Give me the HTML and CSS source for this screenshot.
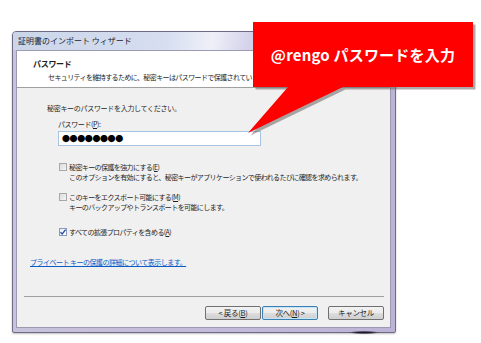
FILE: index.html
```html
<!DOCTYPE html>
<html lang="ja">
  <head>
    <meta charset="UTF-8" />
    <title>証明書のインポート ウィザード</title>
    <link rel="stylesheet" href="styles.css">
  </head>
  <body>
    <div class="window">
      <div class="titlebar">証明書のインポート ウィザード</div>
      <div class="client">
        <div class="header">
          <div class="h-title">パスワード</div>
          <div class="h-sub">セキュリティを維持するために、秘密キーはパスワードで保護されています。</div>
        </div>
        <div class="body">
          <p class="intro">秘密キーのパスワードを入力してください。</p>
          <div class="field">
            <div class="field-label">パスワード(<u>P</u>):</div>
            <div class="input">●●●●●●●●</div>
          </div>
          <div class="opt opt-1">
            <span class="cb"></span>
            <div class="opt-text">
              <div>秘密キーの保護を強力にする(<u>E</u>)</div>
              <div>このオプションを有効にすると、秘密キーがアプリケーションで使われるたびに確認を求められます。</div>
            </div>
          </div>
          <div class="opt opt-2">
            <span class="cb"></span>
            <div class="opt-text">
              <div>このキーをエクスポート可能にする(<u>M</u>)</div>
              <div>キーのバックアップやトランスポートを可能にします。</div>
            </div>
          </div>
          <div class="opt opt-3">
            <span class="cb checked">
              <svg viewBox="0 0 8 8" width="8" height="8"><path d="M1.5 4.2 L3.2 6 L6.6 1.6" fill="none" stroke="#2a4a9a" stroke-width="1.3"/></svg>
            </span>
            <div class="opt-text">
              <div>すべての拡張プロパティを含める(<u>A</u>)</div>
            </div>
          </div>
          <a class="link" href="#">プライベート キーの保護の詳細について表示します。</a>
        </div>
        <div class="footer">
          <div class="buttons">
            <span class="btn">&lt; 戻る(<u>B</u>)</span>
            <span class="btn btn-default">次へ(<u>N</u>) &gt;</span>
            <span class="btn btn-cancel">キャンセル</span>
          </div>
        </div>
      </div>
    </div>

    <!-- red callout over the dialog -->
    <svg class="callout-shape" width="481" height="343" viewBox="0 0 481 343">
      <path class="callout-shadow" d="M253 22 H473 V87 H343 L248 133 L288 87 H253 Z" transform="translate(2.5 2.5)"/>
      <path class="callout-fill" d="M253 22 H473 V87 H343 L248 133 L288 87 H253 Z"/>
    </svg>
    <div class="callout-text">@rengo パスワードを入力</div>
  </body>
</html>
```

FILE: styles.css
```css
html,
body {
  margin: 0;
  height: 100%;
  background: #fff;
}
body {
  position: relative;
  font-family: "Noto Sans CJK JP", "Noto Sans", sans-serif;
  color: #1e1e1e;
  overflow: hidden;
}

.window {
  position: relative;
  margin: 31px 0 0 12px;
  width: 384px;
  height: 302px;
  box-sizing: border-box;
  border: 1px solid #6f6a86;
  border-radius: 4px 4px 2px 2px;
  background: linear-gradient(to right, #c8c3dc, #bdb3d6);
  display: flex;
  flex-direction: column;
  padding: 0 4px 4px 3px;
  box-shadow: 0 1px 2px rgba(0, 0, 0, 0.25);
}
/* dark reflection under the frame */
.window:after {
  content: "";
  position: absolute;
  left: 336px;
  bottom: -2px;
  width: 30px;
  height: 3px;
  border-radius: 2px;
  background: radial-gradient(ellipse at center, #1a1a2a 30%, rgba(30, 30, 50, 0) 75%);
}
.titlebar {
  height: 18px;
  line-height: 18px;
  font-size: 8px;
  color: #1b1b2b;
  background: linear-gradient(100deg, #cad6e8 0%, #d6def0 40%, #eef0f8 52%, #d3d2ea 62%, #d9cde6 100%);
  margin: 0 -4px 0 -3px;
  padding-left: 5px;
  border-radius: 3px 3px 0 0;
}
.client {
  flex: 1;
  background: #f0f0f0;
  border: 1px solid #9d99b0;
  display: flex;
  flex-direction: column;
  font-size: 7px;
  letter-spacing: -0.6px;
}

.header {
  background: #fff;
  height: 37px;
  border-bottom: 1px solid #a0a0a0;
  padding: 8px 0 0 16px;
  box-sizing: border-box;
}
.h-title {
  font-size: 8px;
  font-weight: bold;
  line-height: 10px;
  letter-spacing: -0.3px;
}
.h-sub {
  margin: 3px 0 0 15px;
  line-height: 10px;
  white-space: nowrap;
}

.body {
  flex: 1;
  padding: 15px 0 0 0;
}
.intro {
  margin: 0 0 0 30px;
  line-height: 10px;
  letter-spacing: -0.3px;
}
.field {
  margin: 6px 0 0 41px;
}
.field-label {
  line-height: 10px;
  letter-spacing: -0.4px;
}
.input {
  margin-top: 2px;
  width: 203px;
  height: 15px;
  box-sizing: border-box;
  border: 1px solid #a8c4e0;
  background: #fff;
  font-size: 8px;
  line-height: 13px;
  padding-left: 3px;
  letter-spacing: -0.4px;
  color: #000;
}

.opt {
  display: flex;
  align-items: flex-start;
  margin-left: 42px;
  line-height: 10px;
}
.opt-1 {
  margin-top: 16px;
}
.opt-2 {
  margin-top: 10px;
}
.opt-3 {
  margin-top: 15px;
}
.cb {
  width: 8px;
  height: 8px;
  margin: 1px 2px 0 0;
  box-sizing: border-box;
  border: 1px solid #a8a8a8;
  background: linear-gradient(135deg, #dcdcdc, #f4f4f4);
  display: flex;
  flex-shrink: 0;
}
.cb.checked {
  background: linear-gradient(135deg, #e6eef8, #fff);
  border-color: #8a9ab8;
}
.cb svg {
  margin: -1px;
}
.opt-text {
  white-space: nowrap;
}

.link {
  display: block;
  margin: 20px 0 0 13px;
  line-height: 10px;
  color: #0a5ac8;
  text-decoration: underline;
  letter-spacing: -0.5px;
}

.footer {
  padding: 0 6px 0 7px;
}
.buttons {
  border-top: 1px solid #a0a0a0;
  padding: 9px 0 7px 0;
  display: flex;
  justify-content: flex-end;
  gap: 1px;
}
.btn {
  width: 56px;
  height: 14px;
  box-sizing: border-box;
  border: 1px solid #707070;
  border-radius: 2px;
  background: linear-gradient(#f2f2f2 0%, #ebebeb 48%, #dddddd 52%, #cfcfcf 100%);
  font-size: 7.5px;
  line-height: 12px;
  letter-spacing: -0.3px;
  text-align: center;
}
.btn-default {
  border-color: #3c7fb1;
  box-shadow: inset 0 0 0 1px #c4e4f8;
}
.btn-cancel {
  margin-left: 9px;
}

.callout-shape {
  position: absolute;
  left: 0;
  top: 0;
  pointer-events: none;
}
.callout-shadow {
  fill: rgba(110, 100, 100, 0.55);
}
.callout-fill {
  fill: #ff0000;
}
.callout-text {
  position: absolute;
  left: 253px;
  top: 22px;
  width: 220px;
  height: 65px;
  display: flex;
  align-items: center;
  justify-content: center;
  color: #fff;
  font-weight: bold;
  font-size: 15px;
  letter-spacing: 0.2px;
}
```
